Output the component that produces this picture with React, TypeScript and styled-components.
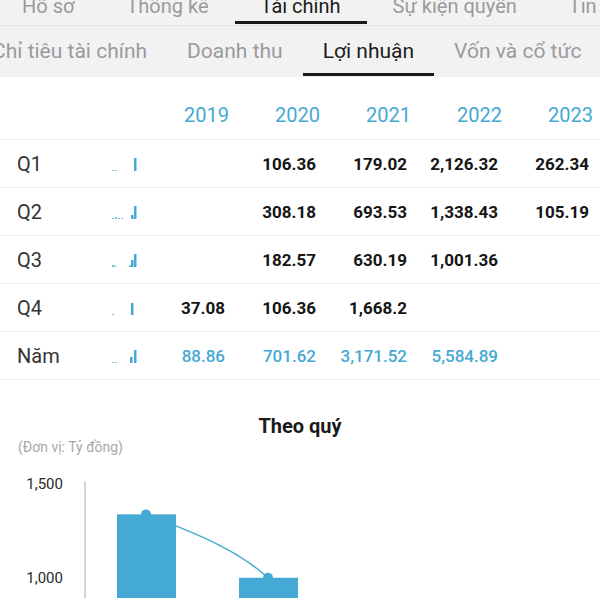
import styled, {createGlobalStyle} from 'styled-components';

const Global = createGlobalStyle`
  html, body {
    margin: 0;
    padding: 0;
    background: #fff;
    font-family: Roboto, "Noto Sans", sans-serif;
    overflow: hidden;
  }
`

const BLUE = '#45a9d5';

const Page = styled.div`
  width: 600px;
  height: 600px;
  overflow: hidden;
  background: #fff;
`

const MainTabs = styled.nav`
  display: flex;
  height: 25px;
  margin-left: -4px;
  background: #f2f2f3;
  border-bottom: 1px solid #e3e3e5;
`

const SubTabs = styled.nav`
  display: flex;
  height: 51px;
  margin-left: -28px;
  background: #f2f2f3;
`

const Tab = styled.div<{ $active?: boolean; $size: number; $gap: number; $pad: number }>`
  display: flex;
  flex-direction: column;
  justify-content: flex-end;
  align-items: center;
  flex-shrink: 0;
  padding: 0 ${p => p.$pad}px;
  position: relative;
  font-size: ${p => p.$size}px;
  line-height: 24px;
  white-space: nowrap;
  color: ${p => (p.$active ? '#1b1b1b' : '#9a9a9c')};
  span {
    margin-bottom: ${p => p.$gap}px;
  }
  &::after {
    content: '';
    position: absolute;
    left: 0;
    right: 0;
    bottom: 1px;
    height: 3px;
    background: ${p => (p.$active ? '#1b1b1b' : 'transparent')};
  }
`

const Table = styled.div`
  margin-top: 14px;
`

const Row = styled.div<{ $head?: boolean }>`
  display: grid;
  grid-template-columns: 138px repeat(5, 91px);
  align-items: center;
  height: ${p => (p.$head ? 48 : 47)}px;
  border-bottom: 1px solid #efefef;
`

const LabelCell = styled.div`
  display: flex;
  align-items: center;
  padding-left: 17px;
  font-size: 20px;
  color: #333;
  span {
    width: 94px;
  }
`

const Year = styled.div`
  text-align: right;
  font-size: 20px;
  color: ${BLUE};
`

const Value = styled.div<{ $total?: boolean }>`
  text-align: right;
  padding-right: 4px;
  font-size: 17px;
  font-weight: ${p => (p.$total ? 500 : 700)};
  color: ${p => (p.$total ? BLUE : '#151515')};
`

const ChartBlock = styled.section`
  margin-top: 34px;
`

const ChartTitle = styled.h3`
  margin: 0;
  text-align: center;
  font-size: 20px;
  line-height: 24px;
  font-weight: 700;
  color: #1a1a1a;
`

const Unit = styled.div`
  padding-left: 18px;
  font-size: 14px;
  line-height: 18px;
  color: #a8a8a8;
`

type Bar = [number, number];

function Spark({bars}: { bars: Bar[] }) {
  return (
    <svg width="26" height="14" viewBox="0 0 26 14">
      {bars.map(([x, h], i) => (
        <rect key={i} x={x} y={14 - h} width={h > 2 ? 2.5 : 2} height={h} fill={BLUE} opacity={h > 2 ? 1 : 0.7}/>
      ))}
    </svg>
  );
}

const years = ['2019', '2020', '2021', '2022', '2023'];

const rows: { label: string; spark: Bar[]; values: string[]; total?: boolean }[] = [
  {label: 'Q1', spark: [[1, 1], [4, 1], [23, 13]], values: ['', '106.36', '179.02', '2,126.32', '262.34']},
  {label: 'Q2', spark: [[1, 1], [4, 2], [7, 1], [10, 1], [20, 4], [23, 13]], values: ['', '308.18', '693.53', '1,338.43', '105.19']},
  {label: 'Q3', spark: [[1, 2], [3, 1], [18, 2], [20, 7], [23, 13]], values: ['', '182.57', '630.19', '1,001.36', '']},
  {label: 'Q4', spark: [[1, 1], [20, 12]], values: ['37.08', '106.36', '1,668.2', '', '']},
  {label: 'Năm', spark: [[1, 1], [4, 1], [19, 6], [23, 13]], values: ['88.86', '701.62', '3,171.52', '5,584.89', ''], total: true},
];

function QuarterChart() {
  const top = 28;
  const perUnit = 94 / 500;
  const y = (v: number) => top + (1500 - v) * perUnit;
  const b1 = y(1338.43);
  const b2 = y(1001.36);
  return (
    <svg width="600" height="142" viewBox="0 0 600 142">
      <text x="63" y={top + 5} textAnchor="end" fontSize="15" fill="#2a2a2a" fontFamily="Roboto, sans-serif">1,500</text>
      <text x="63" y={y(1000) + 5} textAnchor="end" fontSize="15" fill="#2a2a2a" fontFamily="Roboto, sans-serif">1,000</text>
      <line x1="85" y1="25" x2="85" y2="142" stroke="#c8c8c8" strokeWidth="1.5"/>
      <rect x="117" y={b1} width="59" height={142 - b1} fill={BLUE}/>
      <rect x="239" y={b2} width="59" height={142 - b2} fill={BLUE}/>
      <path d={`M146 ${b1} C 205 ${b1 + 22}, 240 ${b1 + 38}, 268 ${b2}`} fill="none" stroke={BLUE} strokeWidth="1.5"/>
      <circle cx="146" cy={b1} r="5" fill={BLUE}/>
      <circle cx="268" cy={b2} r="5" fill={BLUE}/>
    </svg>
  );
}

export default function App() {
  return (
    <Page>
      <Global/>
      <MainTabs>
        {['Hồ sơ', 'Thống kê', 'Tài chính', 'Sự kiện quyền', 'Tin tức'].map(t => (
          <Tab key={t} $active={t === 'Tài chính'} $size={20} $gap={7} $pad={26}><span>{t}</span></Tab>
        ))}
      </MainTabs>
      <SubTabs>
        {['Chỉ tiêu tài chính', 'Doanh thu', 'Lợi nhuận', 'Vốn và cổ tức'].map(t => (
          <Tab key={t} $active={t === 'Lợi nhuận'} $size={21} $gap={14} $pad={20}><span>{t}</span></Tab>
        ))}
      </SubTabs>
      <Table>
        <Row $head>
          <div/>
          {years.map(y => <Year key={y}>{y}</Year>)}
        </Row>
        {rows.map(r => (
          <Row key={r.label}>
            <LabelCell><span>{r.label}</span><Spark bars={r.spark}/></LabelCell>
            {r.values.map((v, i) => <Value key={i} $total={r.total}>{v}</Value>)}
          </Row>
        ))}
      </Table>
      <ChartBlock>
        <ChartTitle>Theo quý</ChartTitle>
        <Unit>(Đơn vị: Tỷ đồng)</Unit>
        <QuarterChart/>
      </ChartBlock>
    </Page>
  );
}
